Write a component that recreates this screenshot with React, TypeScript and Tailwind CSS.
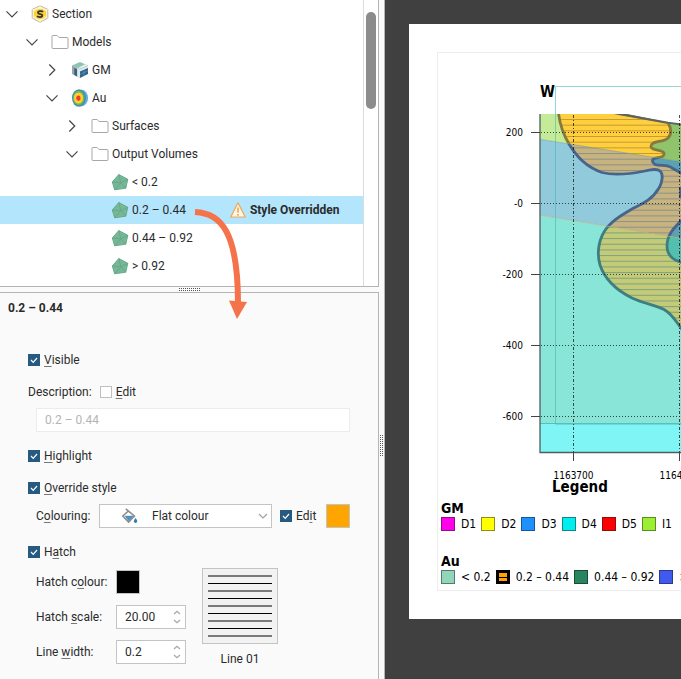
import React from "react";

const INDENT = ["pl-0", "pl-5", "pl-10", "pl-15", "pl-20"];

function Chevron({ open }: { open: boolean }) {
  return (
    <svg width="14" height="14" viewBox="0 0 14 14" fill="none" stroke="#444" strokeWidth="1.2">
      {open ? <path d="M1.5 4.3 L7 9.8 L12.5 4.3" /> : <path d="M4.3 1.5 L9.8 7 L4.3 12.5" />}
    </svg>
  );
}

function SectionIcon() {
  return (
    <svg width="18" height="18" viewBox="0 0 18 18">
      <path d="M9 0.8 L16.8 4.3 V13.2 L9 17.3 L1.2 13.2 V4.3 Z" fill="#fdf3c4" stroke="#b3ab93" strokeWidth="0.8" />
      <path d="M3 5.8 L9 3.4 L15 5.8 V12.4 L9 14.6 L3 12.4 Z" fill="#fbd334" />
      <path d="M1.5 4.5 L4.5 6 M16.5 4.5 L13.5 6 M9 14 V17 M1.5 13 L5 11.5 M16.5 13 L13 11.5 M9 1 V4" fill="none" stroke="#fff8d8" strokeWidth="1" />
      <path d="M12 6.900 C11 5.600 6.900 5.700 7 7.700 C7.100 9.700 11.400 8.500 11.300 10.500 C11.200 12.500 7.200 12.400 6 11" fill="none" stroke="#333" strokeWidth="1.800" />
    </svg>
  );
}

function FolderIcon() {
  return (
    <svg width="18" height="16" viewBox="0 0 18 16" fill="#fff" stroke="#a8a8a8" strokeWidth="1">
      <path d="M1 13.500 V2.300 Q1 1.500 1.800 1.500 H6.200 L8 3.500 H16 Q17 3.500 17 4.500 V13.500 Q17 14.500 16 14.500 H2 Q1 14.500 1 13.500 Z" />
    </svg>
  );
}

function GeoModelIcon() {
  return (
    <svg width="18" height="18" viewBox="0 0 18 18">
      <path d="M9 1 L17 4.5 L9 8 L1 4.5 Z" fill="#8fc5b0" />
      <path d="M7 7 L14 3.2 L17 4.5 L9 8 Z" fill="#e9f1ee" />
      <path d="M1 4.5 L9 8 V17 L1 13 Z" fill="#9aa4ab" />
      <path d="M3.3 7 L6.2 8.5 V15.5 L3.3 14 Z" fill="#2f6386" />
      <path d="M6.200 7 L9 8 V17 L6.200 15.500 Z" fill="#dfe9ec" />
      <path d="M9 8 L17 4.5 V13 L9 17 Z" fill="#2f6488" />
      <path d="M9 8 L17 4.5 V7 L9 10.4 Z" fill="#dfe9ec" />
      <path d="M9 13.4 L17 9.8 M13 8.8 V15" stroke="#6c99b4" strokeWidth="0.6" />
    </svg>
  );
}

function NumericModelIcon() {
  return (
    <svg width="18" height="18" viewBox="0 0 18 18">
      <ellipse cx="10.7" cy="9" rx="6.400" ry="8.2" fill="#69aee0" />
      <ellipse cx="8" cy="9" rx="7" ry="8.700" fill="#3c93b5" />
      <ellipse cx="7.7" cy="9" rx="5.7" ry="7.2" fill="#7fb34c" />
      <ellipse cx="7.500" cy="9" rx="4.600" ry="5.600" fill="#ffd02c" />
      <ellipse cx="7.400" cy="9.200" rx="2.100" ry="2.700" fill="#ee3a37" />
    </svg>
  );
}

function VolumeIcon() {
  return (
    <svg width="18" height="18" viewBox="0 0 18 18" stroke="#62a787" strokeWidth="0.9" strokeLinejoin="round">
      <path d="M7.800 1.500 L16.800 6.3 L14.800 15.2 L3.6 16.8 L1.3 9 Z" fill="#77b797" />
      <path d="M7.800 1.500 L10 9.800 L16.800 6.300 M1.300 9 L10 9.800 L3.600 16.800 M10 9.800 L14.800 15.200" fill="none" />
    </svg>
  );
}

function WarningIcon() {
  return (
    <svg width="16" height="18" viewBox="0 0 16 18">
      <path d="M8 1.8 L15.2 16 H0.8 Z" fill="#fff6e6" stroke="#f2a552" strokeWidth="1.2" strokeLinejoin="round" />
      <path d="M8 6.5 V11.8 M8 13 V14.7" stroke="#f2a552" strokeWidth="1.6" />
    </svg>
  );
}

type Row = { depth: number; open?: boolean; icon: React.ReactNode; label: string; selected?: boolean };

const ROWS: Row[] = [
  { depth: 0, open: true, icon: <SectionIcon />, label: "Section" },
  { depth: 1, open: true, icon: <FolderIcon />, label: "Models" },
  { depth: 2, open: false, icon: <GeoModelIcon />, label: "GM" },
  { depth: 2, open: true, icon: <NumericModelIcon />, label: "Au" },
  { depth: 3, open: false, icon: <FolderIcon />, label: "Surfaces" },
  { depth: 3, open: true, icon: <FolderIcon />, label: "Output Volumes" },
  { depth: 4, icon: <VolumeIcon />, label: "< 0.2" },
  { depth: 4, icon: <VolumeIcon />, label: "0.2 – 0.44", selected: true },
  { depth: 4, icon: <VolumeIcon />, label: "0.44 – 0.92" },
  { depth: 4, icon: <VolumeIcon />, label: "> 0.92" },
];

function Tree() {
  return (
    <div className="flex h-[287px] border-r border-b border-[#b4b4b4] bg-white">
      <ul className="min-w-0 flex-1">
        {ROWS.map((r) => (
          <li key={r.label} className={`flex h-7 items-center ${INDENT[r.depth]} ${r.selected ? "bg-[#b3e5fc]" : ""}`}>
            <span className="mr-1.5 flex w-6 justify-center">
              {r.open !== undefined && (
                <button type="button" aria-label={`Toggle ${r.label}`} aria-expanded={r.open}>
                  <Chevron open={r.open} />
                </button>
              )}
            </span>
            <span className="mr-0.5 flex w-5 justify-center">{r.icon}</span>
            <span>{r.label}</span>
            {r.selected && (
              <span className="ml-11 flex items-center gap-1 font-bold">
                <WarningIcon />
                Style Overridden
              </span>
            )}
          </li>
        ))}
      </ul>
      <div className="flex w-[15px] justify-center border-l border-[#dcdcdc] pt-3">
        <div className="h-[97px] w-2.5 rounded-full bg-[#8c8c8c]" />
      </div>
    </div>
  );
}

function Check({ id, checked, children }: { id: string; checked?: boolean; children: React.ReactNode }) {
  return (
    <span className="flex items-center gap-1">
      <span className="grid">
        <input
          id={id}
          type="checkbox"
          defaultChecked={checked}
          className="peer col-start-1 row-start-1 size-3 appearance-none border border-[#bfbfbf] bg-white checked:border-[#265a80] checked:bg-[#265a80]"
        />
        <svg className="pointer-events-none invisible col-start-1 row-start-1 peer-checked:visible" width="12" height="12" viewBox="0 0 12 12" fill="none" stroke="#fff" strokeWidth="1.2">
          <path d="M3 6 L5.2 8.3 L9 4" />
        </svg>
      </span>
      <label htmlFor={id}>{children}</label>
    </span>
  );
}

function U({ children }: { children: React.ReactNode }) {
  return <span className="underline decoration-[#777] decoration-1 underline-offset-2">{children}</span>;
}

function Spin({ id, value }: { id: string; value: string }) {
  return (
    <div className="flex h-6 w-[70px] items-center border border-[#c4c4c4] bg-white pr-1">
      <input id={id} defaultValue={value} className="w-full min-w-0 bg-transparent pl-2 outline-none" />
      <div className="flex flex-col gap-1 text-[#a6a6a6]">
        <button type="button" aria-label="Increase">
          <svg width="8" height="5" viewBox="0 0 8 5" fill="none" stroke="currentColor" strokeWidth="1.2"><path d="M1 4 L4 1.2 L7 4" /></svg>
        </button>
        <button type="button" aria-label="Decrease">
          <svg width="8" height="5" viewBox="0 0 8 5" fill="none" stroke="currentColor" strokeWidth="1.2"><path d="M1 1 L4 3.8 L7 1" /></svg>
        </button>
      </div>
    </div>
  );
}

function BucketIcon() {
  return (
    <svg className="pointer-events-none col-start-1 row-start-1 ml-[22px] self-center" width="18" height="18" viewBox="0 0 18 18">
      <path d="M3.6 8.8 H13 L7.6 14.2 Z" fill="#4a94c4" />
      <path d="M4.8 1.8 L13.4 9 L7.6 15 L1.8 9 L7.4 4" fill="none" stroke="#8c8c8c" strokeWidth="1.6" />
      <path d="M14.5 11 Q16.6 13.4 16.3 14.6 A1.8 1.8 0 0 1 12.8 14.6 Q12.6 13.4 14.5 11 Z" fill="#2e7fb5" />
    </svg>
  );
}

const HATCH = [0, 1, 2, 3, 4, 5, 6, 7, 8];

function Properties() {
  return (
    <section className="flex-1 border-t border-r border-[#b4b4b4] bg-[#fafafa]">
      <h2 className="mt-[7px] ml-2 h-4 font-bold">0.2 – 0.44</h2>
      <div className="pt-9 pr-7 pl-7">
        <div className="flex h-4">
          <Check id="visible" checked><U>V</U>isible</Check>
        </div>
        <div className="mt-4 flex h-4 items-center gap-2">
          <span>Description:</span>
          <Check id="editdesc"><U>E</U>dit</Check>
        </div>
        <input aria-label="Description" disabled value="0.2 – 0.44" readOnly className="mt-2 ml-2 block h-6 w-[314px] border border-[#ececec] bg-white px-2 text-[#b4b4b4]" />
        <div className="mt-4 flex h-4">
          <Check id="highlight" checked><U>H</U>ighlight</Check>
        </div>
        <div className="mt-4 flex h-4">
          <Check id="override" checked><U>O</U>verride style</Check>
        </div>
        <div className="mt-2 flex h-6 items-center pl-2">
          <label htmlFor="colouring" className="w-[63px]">C<U>o</U>louring:</label>
          <div className="grid h-6 w-[173px]">
            <select id="colouring" className="col-start-1 row-start-1 appearance-none border border-[#c4c4c4] bg-white pl-13">
              <option>Flat colour</option>
            </select>
            <BucketIcon />
            <svg className="pointer-events-none col-start-1 row-start-1 mr-1 self-center justify-self-end" width="10" height="6" viewBox="0 0 10 6" fill="none" stroke="#a0a0a0" strokeWidth="1.2"><path d="M1 1 L5 5 L9 1" /></svg>
          </div>
          <div className="ml-2 w-[46px]">
            <Check id="editcol" checked>Ed<U>i</U>t</Check>
          </div>
          <button type="button" aria-label="Fill colour" className="size-6 border border-[#c4c4c4] bg-[#ffa500]" />
        </div>
        <div className="mt-4 flex h-4">
          <Check id="hatch" checked>H<U>a</U>tch</Check>
        </div>
        <div className="mt-2 flex gap-4 pl-2">
          <div className="mt-0.5 grid h-fit grid-cols-[80px_70px] items-center gap-y-[11px]">
            <label htmlFor="hcol">Hatch c<U>o</U>lour:</label>
            <button id="hcol" type="button" className="size-6 border border-[#c4c4c4] bg-black" />
            <label htmlFor="hscale">Hatch <U>s</U>cale:</label>
            <Spin id="hscale" value="20.00" />
            <label htmlFor="lwidth">Line <U>w</U>idth:</label>
            <Spin id="lwidth" value="0.2" />
          </div>
          <div className="flex flex-col items-center gap-[7px]">
            <button type="button" aria-label="Hatch pattern" className="size-[76px] border border-[#c4c4c4] bg-[#f2f2f2]">
              <svg width="74" height="74" shapeRendering="crispEdges">
                {HATCH.map((i) => (
                  <rect key={i} x="5" width="64" y={i % 2 ? 14 + Math.round((i - 1) * 7.5) : 6 + Math.round(i * 7.5)} height={i % 2 ? 1 : 2} fill={i % 2 ? "#000" : "#7a7a7a"} />
                ))}
              </svg>
            </button>
            <span>Line 01</span>
          </div>
        </div>
      </div>
    </section>
  );
}

const VEIN =
  "M558 108 C559 124 563 134 569 144 C577 157 586 167 602 172.5 C615 176 630 174 645 171 C652 169.5 657 168.5 660 171 C663.500 174 662.500 182 659 188 C652 200 642 204 632 209 C620 216 610 222 604 232 C598 242 597 255 600 265 C604 277 614 289 632 298 C645 304 656 305 664 309.500 C672 314 675 320 681 328 L688 338 H1400 V176 L690 180 C682 173 678 171 672 168 C667 164 661 166.500 655 164.500 C651 162 652 158.500 656 158 C661 157.500 664.500 157 664 153 C663 149 650 151 651 146 C652 140 663 143 668 138 C672 134 671 128 668 122.500 L610 112 V100 H558 Z";
const HOLES = ["M688 214 C680 223 667 231 667 246 C667 256 675 263 688 263 Z", "M690 183 C677 184 677 201 690 202 Z"];

const BANDS = [
  { id: "a", clip: "M540 114 H1400 V275.500 L540 139.300 Z", bg: "#c6eb98", vein: "#ffcf3e", line: "#857a3a", hatch: "#c59c35", hole: "#8fc36c" },
  { id: "b", clip: "M540 139.300 L1400 275.500 V357 L540 215 Z", bg: "#90cadb", vein: "#c6b37d", line: "#46648c", hatch: "#8e9190", hole: "#5ba1b1" },
  { id: "c", clip: "M540 215 L1400 357 V424 H540 Z", bg: "#88e5d8", vein: "#c3cb78", line: "#3d7f7e", hatch: "#80a27f", hole: "#53bfaf" },
];
const HATCH_YS = Array.from({ length: 38 }, (_, i) => 119.5 + i * 5.67);
const LEVELS: [number, string][] = [[132.5, "200"], [203.5, "-0"], [274.5, "-200"], [345.5, "-400"], [416.5, "-600"]];
const EASTINGS: [number, string][] = [[573.5, "1163700"], [679.5, "1164000"]];

function CrossSection() {
  return (
    <svg className="block h-[432px] w-full font-['DejaVu_Sans_Condensed','DejaVu_Sans',sans-serif]" role="img" aria-label="Cross section">
      <g transform="translate(-438 -53)">
        <defs>
          {BANDS.map((b) => (
            <clipPath key={b.id} id={`band-${b.id}`}><path d={b.clip} /></clipPath>
          ))}
          <clipPath id="vein"><path d={VEIN} /></clipPath>
        </defs>
        <rect x="540" y="423" width="860" height="29" fill="#80f5f6" />
        {BANDS.map((b) => (
          <g key={b.id} clipPath={`url(#band-${b.id})`}>
            <rect x="540" y="110" width="860" height="314" fill={b.bg} />
            <path d="M666 110 H1400 V178 H690 L655 165 L648 150 Z" fill={b.hole} />
            <path d={VEIN} fill={b.vein} />
            <g clipPath="url(#vein)" stroke={b.hatch} strokeWidth="1">
              {HATCH_YS.map((y) => (
                <path key={y} d={`M540 ${y} H1400`} />
              ))}
            </g>
            {HOLES.map((d) => (
              <path key={d} d={d} fill={b.hole} stroke={b.line} strokeWidth="2.800" />
            ))}
            <path d={VEIN} fill="none" stroke={b.line} strokeWidth="2.800" />
          </g>
        ))}
        <path d="M540 139.300 L1400 275.500" stroke="#708c80" strokeOpacity="0.5" strokeWidth="0.800" />
        <path d="M540 215 L1400 357" stroke="#c8a070" strokeOpacity="0.6" strokeWidth="0.900" />
        <path d="M618 112 L668 122.500 L681 124.500 L1400 124.500 V108 H618 Z" fill="#fff" />
        <path d="M617 113.500 L668 122.700 L681 124.500 L1400 124.500" fill="none" stroke="#5d6262" strokeWidth="1.800" />
        <rect x="550" y="106" width="300" height="8" fill="#fff" />
        <path d="M540 423.500 H1400" stroke="#58bfc0" />
        <path d="M555.500 424.500 H1400" stroke="#58bfc0" strokeOpacity="0.5" />
        <path d="M555.500 424 V86.500 H1400" fill="none" stroke="#3fb5ae" strokeOpacity="0.55" />
        <g stroke="#111" strokeOpacity="0.75">
          {LEVELS.map(([y]) => (
            <path key={y} d={`M541 ${y} H1400`} strokeDasharray="1 2" />
          ))}
          {EASTINGS.map(([x]) => (
            <path key={x} d={`M${x} 115 V452`} strokeDasharray="3 2 1 2" />
          ))}
        </g>
        <path d="M540 114 V452.500 H1400" fill="none" stroke="#4a5f5f" strokeWidth="1.300" />
        <g stroke="#444">
          {LEVELS.map(([y]) => (
            <path key={y} d={`M531 ${y} H540`} />
          ))}
          {EASTINGS.map(([x]) => (
            <path key={x} d={`M${x} 452 V461`} />
          ))}
        </g>
        <g fontSize="10" fill="#000">
          {LEVELS.map(([y, t]) => (
            <text key={t} x="523" y={y + 3.5} textAnchor="end">{t}</text>
          ))}
          {EASTINGS.map(([x, t]) => (
            <text key={t} x={x} y="479" textAnchor="middle">{t}</text>
          ))}
        </g>
        <text x="540" y="97" fontSize="15" fontWeight="bold">W</text>
      </g>
    </svg>
  );
}

const GM = [
  { c: "bg-[#ff00ea] border-[#8f0f85]", t: "D1" },
  { c: "bg-[#ffff00] border-[#8f8f1f]", t: "D2" },
  { c: "bg-[#1e90ff] border-[#1c5590]", t: "D3" },
  { c: "bg-[#00eeee] border-[#118888]", t: "D4" },
  { c: "bg-[#ff0000] border-[#8f0f0f]", t: "D5" },
  { c: "bg-[#9bee30] border-[#5c8c24]", t: "I1" },
];
const AU = [
  { c: "bg-[#93d5ba] border-[#557b6c]", t: "< 0.2" },
  { c: "bg-[#ffa500] border-black border-3", t: "0.2 – 0.44" },
  { c: "bg-[#288560] border-[#1a4d39]", t: "0.44 – 0.92" },
  { c: "bg-[#415aee] border-[#2a3990]", t: "> 0.92" },
];

function LegendRow({ title, items }: { title: string; items: { c: string; t: string }[] }) {
  return (
    <div className="pl-[3px]">
      <h4 className="h-[18px] text-[14px] leading-[18px] font-bold">{title}</h4>
      <ul className="flex h-3.5 items-center gap-[5px] text-[12px] whitespace-nowrap">
        {items.map((i) => (
          <li key={i.t} className="flex shrink-0 items-center gap-1.5">
            <span className={`flex size-3.5 flex-col justify-center border ${i.c}`}>
              {i.t === "0.2 – 0.44" && <span className="h-px bg-black" />}
            </span>
            {i.t}
          </li>
        ))}
      </ul>
    </div>
  );
}

function Grip({ vertical }: { vertical?: boolean }) {
  return (
    <svg width={vertical ? 4 : 22} height={vertical ? 22 : 3} stroke="#555" strokeDasharray="1 1" shapeRendering="crispEdges">
      {vertical ? <path d="M0.500 0 V22 M2.500 0 V22" /> : <path d="M0 0.500 H22 M0 2.500 H22" />}
    </svg>
  );
}

export default function App() {
  return (
    <main className="flex min-h-screen overflow-hidden bg-[#fafafa] font-[Roboto,sans-serif] text-[12px] leading-4 text-[#2b2b2b]">
      <div className="relative flex w-[379px] shrink-0 flex-col">
        <Tree />
        <div className="flex h-[5px] items-center justify-center">
          <Grip />
        </div>
        <Properties />
        <svg className="pointer-events-none absolute top-[200px] left-[190px]" width="64" height="124" viewBox="190 200 64 124">
          <path d="M195 212 C221 213 238 232 238 303" fill="none" stroke="#f4734a" strokeWidth="6" />
          <path d="M229 300.500 L247 302 L237 319 Z" fill="#f4734a" />
        </svg>
      </div>
      <div className="flex w-1.5 shrink-0 flex-col items-center border-r border-[#b4b4b4] pt-[435px]">
        <Grip vertical />
      </div>
      <div className="min-w-0 flex-1 bg-[#404040] pt-6 pl-6">
        <div className="h-[595px] bg-white pt-7 pl-7">
          <div className="h-[539px] overflow-hidden border-y border-l border-[#ececec] font-['DejaVu_Sans_Condensed','DejaVu_Sans',sans-serif] text-black">
            <CrossSection />
            <h3 className="-mt-[7px] mb-[3px] h-[18px] pl-[114px] text-[15px] leading-[18px] font-bold">Legend</h3>
            <div className="flex flex-col gap-[21px]">
              <LegendRow title="GM" items={GM} />
              <LegendRow title="Au" items={AU} />
            </div>
          </div>
        </div>
      </div>
    </main>
  );
}
